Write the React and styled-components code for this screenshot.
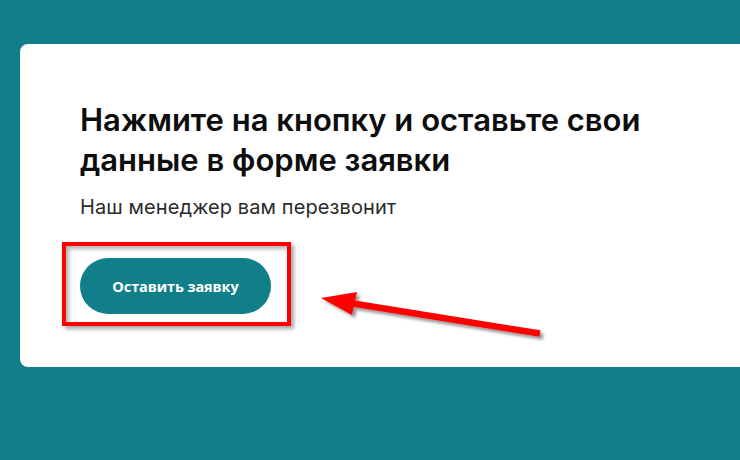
import React from "react";
import styled, { createGlobalStyle } from "styled-components";

const Global = createGlobalStyle`
  html, body {
    margin: 0;
    padding: 0;
    background: #107f8a;
    overflow: hidden;
  }
  body {
    font-family: "Inter", "Noto Sans", sans-serif;
  }
`;

const Page = styled.div`
  width: 740px;
  height: 460px;
  padding: 44px 0 0 20px;
  box-sizing: border-box;
  background: #107f8a;
`;

const Card = styled.section`
  position: relative;
  box-sizing: border-box;
  width: 740px;
  height: 323px;
  background: #ffffff;
  border-radius: 8px;
  padding: 56px 0 0 60px;
  display: flex;
  flex-direction: column;
  align-items: flex-start;
`;

const Title = styled.h2`
  margin: 0;
  width: 600px;
  font-family: "Inter", "Noto Sans", sans-serif;
  font-weight: 600;
  font-size: 31px;
  line-height: 40px;
  color: #0d0d0d;
  letter-spacing: 0;
`;

const Subtitle = styled.p`
  margin: 15px 0 0;
  font-family: "Inter", "Noto Sans", sans-serif;
  font-weight: 400;
  font-size: 20px;
  line-height: 24px;
  color: #2b2b2b;
  letter-spacing: 0.1px;
`;

const Highlight = styled.div`
  margin: 23px 0 0 -18px;
  padding: 12px 16px 8px 14px;
  border: 4px solid #ff0000;
  box-shadow: 3px 3px 4px rgba(0, 0, 0, 0.35),
    inset 3px 3px 4px rgba(0, 0, 0, 0.3);
`;

const Button = styled.button`
  display: flex;
  align-items: center;
  justify-content: center;
  width: 191px;
  height: 56px;
  border: none;
  border-radius: 28px;
  background: #107f8a;
  color: #ffffff;
  font-family: "Open Sans", "Noto Sans", sans-serif;
  font-weight: 700;
  font-size: 14.5px;
  letter-spacing: -0.1px;
  cursor: pointer;
`;

const Pointer = styled.svg`
  position: absolute;
  left: 260px;
  top: 236px;
  width: 290px;
  height: 70px;
  overflow: visible;
`;

export default function App() {
  return (
    <>
      <Global />
      <Page>
        <Card>
          <Title>Нажмите на кнопку и оставьте свои данные в форме заявки</Title>
          <Subtitle>Наш менеджер вам перезвонит</Subtitle>
          <Highlight>
            <Button>Оставить заявку</Button>
          </Highlight>
          <Pointer viewBox="280 280 290 70">
            <defs>
              <filter id="arrowShadow" x="-10%" y="-30%" width="130%" height="180%">
                <feDropShadow dx="3" dy="3" stdDeviation="1.6" floodColor="#000" floodOpacity="0.4" />
              </filter>
            </defs>
            <g fill="#ff0000" filter="url(#arrowShadow)">
              <polygon points="321,298 357,292 352,315" />
              <polygon points="350.5,299.8 540.5,330.3 539.5,336.7 349.5,306.2" />
            </g>
          </Pointer>
        </Card>
      </Page>
    </>
  );
}
